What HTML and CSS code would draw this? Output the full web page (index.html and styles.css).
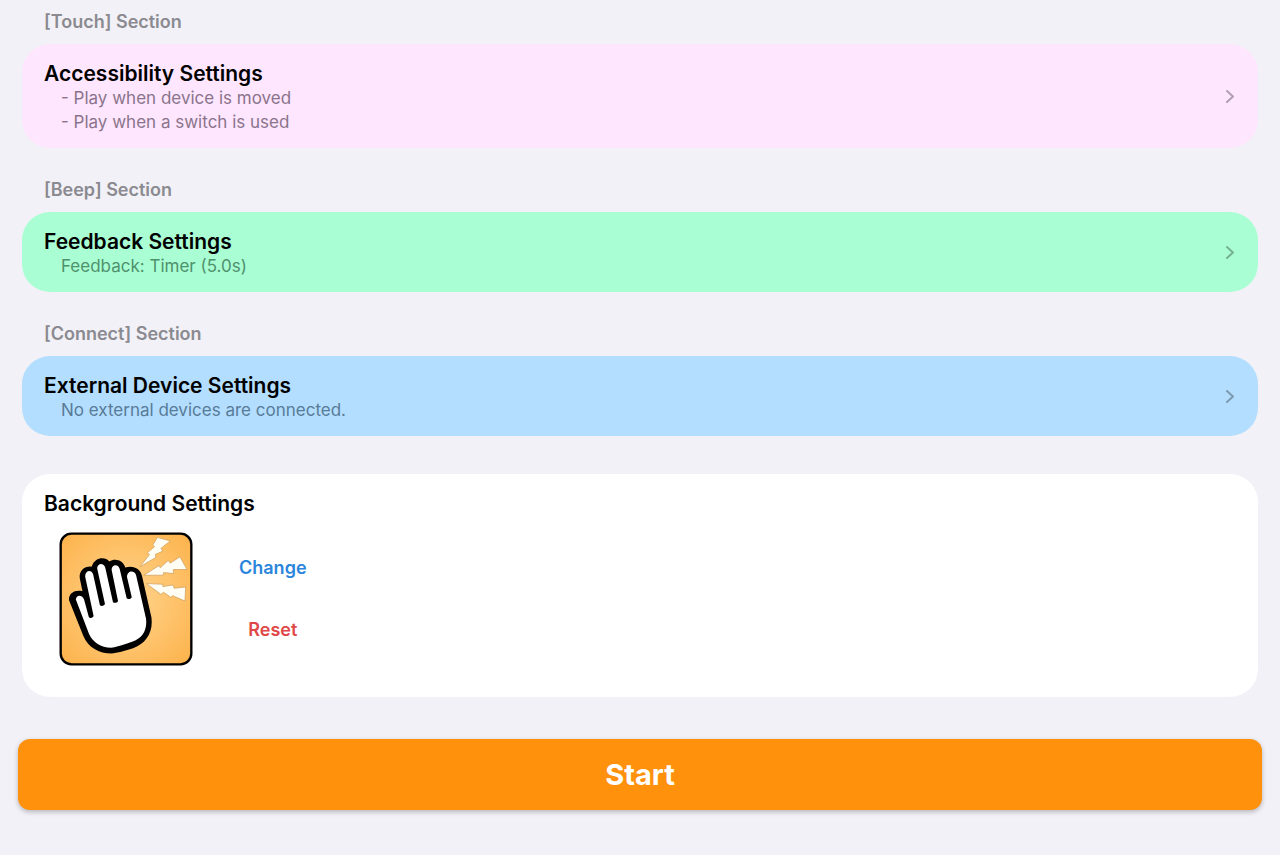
FILE: index.html
```html
<!DOCTYPE html>
<html lang="en">
<head>
  <meta charset="UTF-8" />
  <meta name="viewport" content="width=device-width, initial-scale=1.0"/>
  <title>Settings</title>
  <link rel="stylesheet" href="styles.css">
</head>
<body>
  <main class="page">
    <section class="section">
      <h2 class="section-label">[Touch] Section</h2>
      <a class="card card-touch" href="#accessibility">
        <div class="card-text">
          <h3>Accessibility Settings</h3>
          <p>- Play when device is moved</p>
          <p>- Play when a switch is used</p>
        </div>
        <svg class="chevron" viewBox="0 0 10 16" aria-hidden="true"><path d="M2 3l6 5.500-6 5.500"/></svg>
      </a>
    </section>

    <section class="section">
      <h2 class="section-label">[Beep] Section</h2>
      <a class="card card-beep" href="#feedback">
        <div class="card-text">
          <h3>Feedback Settings</h3>
          <p>Feedback: Timer (5.0s)</p>
        </div>
        <svg class="chevron" viewBox="0 0 10 16" aria-hidden="true"><path d="M2 3l6 5.500-6 5.500"/></svg>
      </a>
    </section>

    <section class="section">
      <h2 class="section-label">[Connect] Section</h2>
      <a class="card card-connect" href="#external">
        <div class="card-text">
          <h3>External Device Settings</h3>
          <p>No external devices are connected.</p>
        </div>
        <svg class="chevron" viewBox="0 0 10 16" aria-hidden="true"><path d="M2 3l6 5.500-6 5.500"/></svg>
      </a>
    </section>

    <section class="background-card">
      <h3>Background Settings</h3>
      <div class="background-row">
        <svg class="preview" viewBox="28 20 400 400" role="img" aria-label="Current background">
          <defs>
            <radialGradient id="glow" r="0.7">
              <stop offset="0" stop-color="#ffd590"/>
              <stop offset="1" stop-color="#fdb24a"/>
            </radialGradient>
          </defs>
          <rect x="33" y="25" width="390" height="390" rx="32" fill="url(#glow)" stroke="#000" stroke-width="7"/>
          <!-- hand -->
          <path fill="#000" d="M58 224 C56 202 76 192 98 197 L90 158 C87 135 104 121 126 123 C134 95 166 92 178 108 C196 97 219 104 226 126 C250 118 272 130 276 152 L304 275 C309 315 292 345 262 361 Q240 373 186 383 C146 382 116 365 101 331 Z"/>
          <path fill="#fff" d="M78 221 C82 206 98 208 103 222 L117 274 C120 279 132 276 131 269 L106 153 C106 134 125 131 130 147 L150 238 C153 243 165 240 165 234 L142 129 C142 112 162 111 166 126 L189 229 C192 234 205 231 204 225 L185 133 C185 117 204 114 209 130 L230 218 C233 223 246 219 245 214 L231 154 C231 136 251 132 258 148 L288 280 C291 310 280 332 257 343 Q239 352 190 365 C154 367 131 351 118 325 Z"/>
          <!-- lightning bolts -->
          <g class="bolts">
            <path d="M322 36 L360 47 L332 69 L338 77 L315 87 L318 95 L270 124 L298 87 L292 82 L313 64 L308 59 Z"/>
            <path d="M389 94 L410 132 L369 132 L370 144 L340 141 L339 149 L281 149 L327 120 L330 127 L354 105 L360 113 Z"/>
            <path d="M406 184 L404 226 L367 210 L362 215 L340 200 L332 206 L289 174 L338 176 L338 183 L368 178 L372 188 Z"/>
          </g>
        </svg>
        <div class="background-actions">
          <button type="button" class="change-btn">Change</button>
          <button type="button" class="reset-btn">Reset</button>
        </div>
      </div>
    </section>

    <button type="button" class="start-btn">Start</button>
  </main>
</body>
</html>
```
FILE: styles.css
```css
* {
  box-sizing: border-box;
}

body {
  font-family: Inter, sans-serif;
  background: #f2f1f7;
  margin: 0;
}

h2, h3, p {
  margin: 0;
}

.page {
  display: flex;
  flex-direction: column;
  padding: 10px 22px 44px;
}

.section {
  margin-bottom: 30px;
}

.section-label {
  padding: 0 22px;
  margin-bottom: 10px;
  font-size: 18px;
  font-weight: 600;
  line-height: 24px;
  color: #8a8a90;
}

.card {
  display: flex;
  align-items: center;
  justify-content: space-between;
  padding: 18px 22px 14px;
  border-radius: 28px;
  color: #000;
  text-decoration: none;
}

.card-touch {
  background: #fee6fe;
}

.card-beep {
  background: #a9ffd3;
}

.card-connect {
  background: #b3deff;
}

h3 {
  font-size: 21px;
  font-weight: 600;
  line-height: 24px;
}

.card p {
  padding-left: 17px;
  font-size: 17px;
  line-height: 24px;
  color: #8a748c;
}

.card-beep p {
  color: #4f916d;
}

.card-connect p {
  color: #587b98;
}

.chevron {
  width: 10px;
  height: 16px;
  margin: 0 1px 4px 0;
  fill: none;
  stroke: #000;
  stroke-width: 2;
  stroke-linecap: round;
  stroke-linejoin: round;
  opacity: 0.3;
}

.background-card {
  margin-top: 8px;
  padding: 18px 22px 31px;
  background: #fff;
  border-radius: 28px;
}

.background-row {
  display: flex;
  align-items: center;
  gap: 40px;
  margin-top: 16px;
  padding-left: 15px;
}

.preview {
  width: 134px;
  height: 134px;
}

.bolts {
  fill: #fffef4;
  stroke: #c99a58;
  stroke-width: 2;
}

.background-actions {
  display: flex;
  flex-direction: column;
  align-items: center;
  gap: 30px;
}

.background-actions button {
  padding: 4px 6px;
  border: none;
  background: none;
  font-family: inherit;
  font-size: 18px;
  font-weight: 600;
  line-height: 24px;
  cursor: pointer;
}

.background-actions .change-btn {
  color: #2a86dc;
}

.background-actions .reset-btn {
  color: #e04848;
}

.start-btn {
  margin: 42px -4px 0;
  padding: 18px 17px 17px;
  border: none;
  border-radius: 12px;
  background: #ff910c;
  box-shadow: 0 2px 5px rgba(0, 0, 0, 0.25);
  color: #fff;
  font-family: inherit;
  font-size: 29px;
  font-weight: 700;
  line-height: 36px;
  cursor: pointer;
}
```
